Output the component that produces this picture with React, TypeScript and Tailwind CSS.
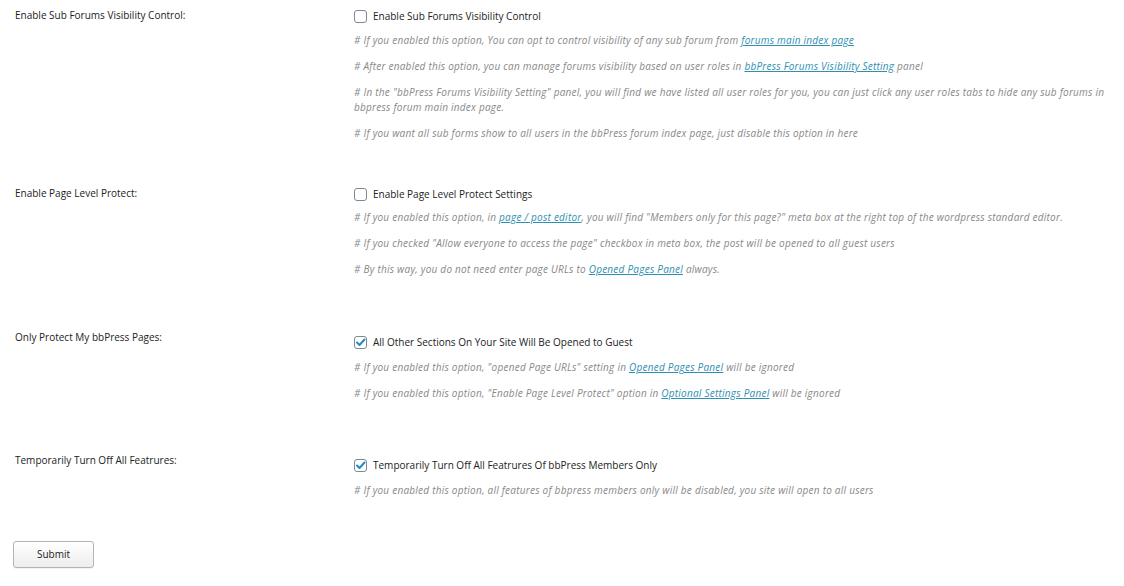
import React from "react";

const Link = ({ children }: { children: React.ReactNode }) => (
  <a className="text-[#2e8fb0] underline underline-offset-1" href="#">
    {children}
  </a>
);

const Check = ({ checked, label }: { checked: boolean; label: string }) => (
  <div className="flex h-[16px] items-center">
    <span className="flex h-[13px] w-[13px] items-center justify-center rounded-[3px] border border-[#7e8993] bg-white">
      {checked && (
        <svg width="11" height="11" viewBox="0 0 11 11">
          <path d="M2 5.5 L4.5 8 L9.5 2.5" fill="none" stroke="#1e8cbe" strokeWidth="2" strokeLinecap="round" strokeLinejoin="round" />
        </svg>
      )}
    </span>
    <span className="ml-[6px] text-[#222]">{label}</span>
  </div>
);

const Desc = ({ children, first }: { children: React.ReactNode; first?: boolean }) => (
  <p className={`italic tracking-[0.24px] text-[#888] ${first ? "" : "mt-[11px]"}`}>{children}</p>
);

function Row({
  label,
  labelPt,
  contentPt,
  pb,
  descMt,
  checked,
  checkLabel,
  children,
}: {
  label: string;
  labelPt: string;
  contentPt: string;
  pb: string;
  descMt: string;
  checked: boolean;
  checkLabel: string;
  children: React.ReactNode;
}) {
  return (
    <div className={`flex ${pb}`}>
      <div className={`w-[354px] shrink-0 pl-[15px] text-[#222] ${labelPt}`}>{label}</div>
      <div className={`flex-1 pr-[8px] ${contentPt}`}>
        <Check checked={checked} label={checkLabel} />
        <div className={descMt}>{children}</div>
      </div>
    </div>
  );
}

export default function App() {
  return (
    <div
      className="min-h-[586px] w-[1124px] bg-white text-[10px] leading-[15px]"
      style={{ fontFamily: "'Open Sans', sans-serif" }}
    >
      <Row
        label="Enable Sub Forums Visibility Control:"
        labelPt="pt-[8px]"
        contentPt="pt-[8px]"
        pb="pb-[37px]"
        descMt="mt-[9px]"
        checked={false}
        checkLabel="Enable Sub Forums Visibility Control"
      >
        <Desc first>
          # If you enabled this option, You can opt to control visibility of any sub forum from{" "}
          <Link>forums main index page</Link>
        </Desc>
        <Desc>
          # After enabled this option, you can manage forums visibility based on user roles in{" "}
          <Link>bbPress Forums Visibility Setting</Link> panel
        </Desc>
        <Desc>
          # In the "bbPress Forums Visibility Setting" panel, you will find we have listed all user roles for you,
          you can just click any user roles tabs to hide any sub forums in bbpress forum main index page.
        </Desc>
        <Desc>
          # If you want all sub forms show to all users in the bbPress forum index page, just disable this option
          in here
        </Desc>
      </Row>

      <Row
        label="Enable Page Level Protect:"
        labelPt="pt-[8px]"
        contentPt="pt-[8px]"
        pb="pb-[45px]"
        descMt="mt-[8px]"
        checked={false}
        checkLabel="Enable Page Level Protect Settings"
      >
        <Desc first>
          # If you enabled this option, in <Link>page / post editor</Link>, you will find "Members only for this
          page?" meta box at the right top of the wordpress standard editor.
        </Desc>
        <Desc>
          # If you checked "Allow everyone to access the page" checkbox in meta box, the post will be opened to
          all guest users
        </Desc>
        <Desc>
          # By this way, you do not need enter page URLs to <Link>Opened Pages Panel</Link> always.
        </Desc>
      </Row>

      <Row
        label="Only Protect My bbPress Pages:"
        labelPt="pt-[8px]"
        contentPt="pt-[12px]"
        pb="pb-[44px]"
        descMt="mt-[10px]"
        checked={true}
        checkLabel="All Other Sections On Your Site Will Be Opened to Guest"
      >
        <Desc first>
          # If you enabled this option, "opened Page URLs" setting in <Link>Opened Pages Panel</Link> will be
          ignored
        </Desc>
        <Desc>
          # If you enabled this option, "Enable Page Level Protect" option in{" "}
          <Link>Optional Settings Panel</Link> will be ignored
        </Desc>
      </Row>

      <Row
        label="Temporarily Turn Off All Featrures:"
        labelPt="pt-[8px]"
        contentPt="pt-[12px]"
        pb="pb-[43px]"
        descMt="mt-[10px]"
        checked={true}
        checkLabel="Temporarily Turn Off All Featrures Of bbPress Members Only"
      >
        <Desc first>
          # If you enabled this option, all features of bbpress members only will be disabled, you site will open
          to all users
        </Desc>
      </Row>

      <div className="pl-[13px]">
        <button className="h-[27px] w-[81px] rounded-[3px] border border-[#b4b4b4] bg-gradient-to-b from-white to-[#ededed] text-[10px] text-[#222] shadow-[0_1px_0_rgba(0,0,0,0.05)]">
          Submit
        </button>
      </div>
    </div>
  );
}
